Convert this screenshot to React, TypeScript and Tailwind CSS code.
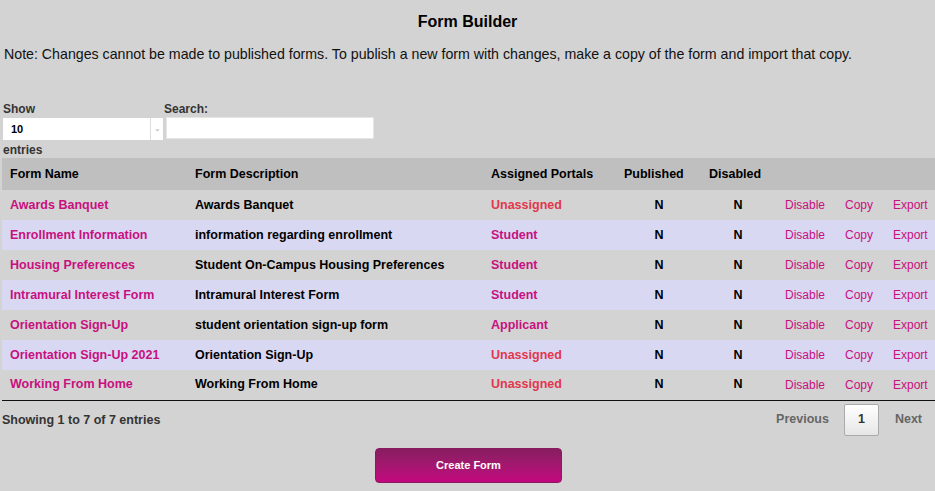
import React from "react";

type Row = {
  name: string;
  description: string;
  portal: string;
};

const rows: Row[] = [
  { name: "Awards Banquet", description: "Awards Banquet", portal: "Unassigned" },
  { name: "Enrollment Information", description: "information regarding enrollment", portal: "Student" },
  { name: "Housing Preferences", description: "Student On-Campus Housing Preferences", portal: "Student" },
  { name: "Intramural Interest Form", description: "Intramural Interest Form", portal: "Student" },
  { name: "Orientation Sign-Up", description: "student orientation sign-up form", portal: "Applicant" },
  { name: "Orientation Sign-Up 2021", description: "Orientation Sign-Up", portal: "Unassigned" },
  { name: "Working From Home", description: "Working From Home", portal: "Unassigned" },
];

const font = "font-['Liberation_Sans',Arial,sans-serif]";

export default function App() {
  return (
    <div className={`min-h-[491px] w-[935px] bg-[#d3d3d3] ${font} text-black`}>
      <h1 className="pt-[12px] text-center text-[16px] font-bold leading-[20px]">
        Form Builder
      </h1>
      <p className="mt-[14px] pl-[4px] text-[14.2px] leading-[16px] text-[#111]">
        Note: Changes cannot be made to published forms. To publish a new form with changes, make a copy of the form and import that copy.
      </p>

      {/* length + filter controls */}
      <div className="mt-[40px] flex items-start text-[12px] font-bold leading-[14px] text-[#333]">
        <div className="w-[164px]">
          <div className="pl-[3px]">Show</div>
          <div className="ml-[3px] mt-[2px] flex h-[22px] w-[160px] items-center bg-white">
            <span className="flex-1 pl-[8px] text-[11px] text-black">10</span>
            <span className="flex h-full w-[13px] items-center justify-center border-l border-[#ddd] text-[8px] font-normal text-[#aaa]">
              ⌄
            </span>
          </div>
          <div className="mt-[3px] pl-[3px]">entries</div>
        </div>
        <div>
          <div>Search:</div>
          <div className="ml-[2px] mt-[1px] h-[22px] w-[208px] border border-[#e5e5e5] bg-white" />
        </div>
      </div>

      {/* table */}
      <table className="ml-[2px] mt-[1px] w-[933px] table-fixed border-collapse text-left text-[12.5px] font-bold">
        <colgroup>
          <col className="w-[185px]" />
          <col className="w-[296px]" />
          <col className="w-[131px]" />
          <col className="w-[82px]" />
          <col className="w-[84px]" />
          <col className="w-[60px]" />
          <col className="w-[48px]" />
          <col className="w-[47px]" />
        </colgroup>
        <thead>
          <tr className="h-[32px] bg-[#bfbfbf]">
            <th className="pl-[8px]">Form Name</th>
            <th className="pl-[8px]">Form Description</th>
            <th className="pl-[8px]">Assigned Portals</th>
            <th className="pl-[10px]">Published</th>
            <th className="pl-[13px]">Disabled</th>
            <th />
            <th />
            <th />
          </tr>
        </thead>
        <tbody className="border-b border-[#111]">
          {rows.map((r, i) => (
            <tr
              key={r.name}
              className={`h-[30px] ${i % 2 === 1 ? "bg-[#d9d8f3]" : "bg-[#d3d3d3]"}`}
            >
              <td className="pl-[8px] text-[#c8107f]">{r.name}</td>
              <td className="pl-[8px]">{r.description}</td>
              <td
                className={`pl-[8px] ${
                  r.portal === "Unassigned" ? "text-[#e2374c]" : "text-[#c8107f]"
                }`}
              >
                {r.portal}
              </td>
              <td className="pl-[8px] text-center">N</td>
              <td className="text-center">N</td>
              <td className="pl-[5px] text-[12px] font-normal text-[#c8107f]">Disable</td>
              <td className="pl-[5px] text-[12px] font-normal text-[#c8107f]">Copy</td>
              <td className="pl-[5px] text-[12px] font-normal text-[#c8107f]">Export</td>
            </tr>
          ))}
        </tbody>
      </table>

      {/* footer */}
      <div className="mt-[3px] flex items-start justify-between text-[12.5px] font-bold">
        <div className="pl-[2px] pt-[7px] text-[#333]">Showing 1 to 7 of 7 entries</div>
        <div className="flex items-center pr-[13px] text-[#666]">
          <span className="mr-[15px]">Previous</span>
          <span className="flex h-[32px] w-[35px] items-center justify-center rounded-[2px] border border-[#aaa] bg-gradient-to-b from-white to-[#e6e6e6] text-[#333]">
            1
          </span>
          <span className="ml-[16px]">Next</span>
        </div>
      </div>

      <div className="mt-[12px] flex justify-center pl-[2px]">
        <button className="h-[35px] w-[187px] rounded-[4px] border border-[#8a1a60] bg-gradient-to-b from-[#871d60] to-[#c3057f] text-[11px] font-bold text-white">
          Create Form
        </button>
      </div>
    </div>
  );
}
